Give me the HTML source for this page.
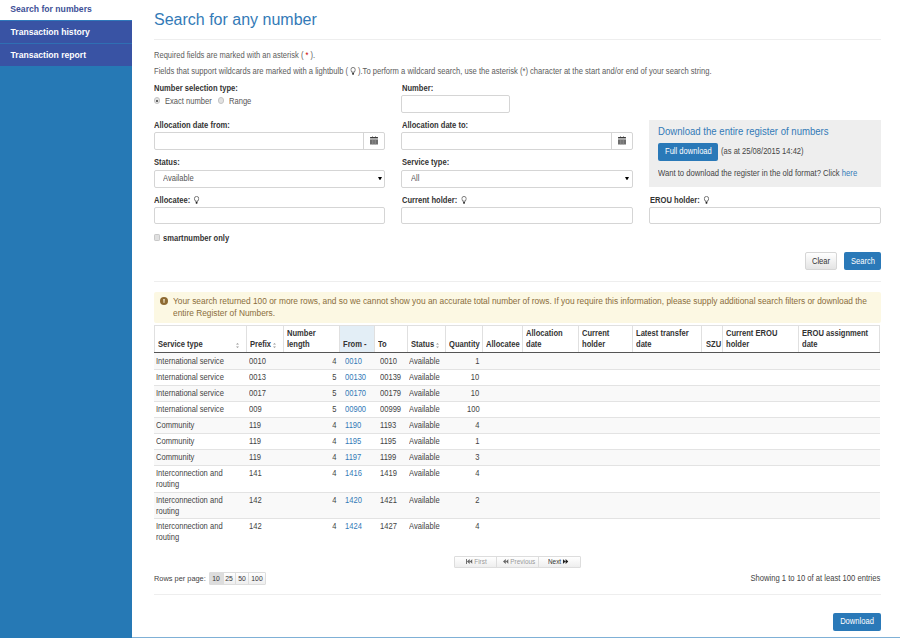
<!DOCTYPE html><html><head><meta charset="utf-8"><style>
*{margin:0;padding:0}
html,body{width:900px;height:638px;overflow:hidden;background:#fff;font-family:"Liberation Sans",sans-serif}
.t{position:absolute;white-space:nowrap}
.r{position:absolute}
.radio{position:absolute;width:6.4px;height:6.4px;border:0.8px solid #c4c4c4;border-radius:50%;background:#e2e2e2;box-sizing:border-box}
.radio.on:after{content:"";position:absolute;left:1.4px;top:1.4px;width:2.2px;height:2.2px;border-radius:50%;background:#555;box-shadow:0 0 0.6px #777}
.chk{position:absolute;width:6px;height:6.3px;border:0.8px solid #c8c8c8;border-radius:1.2px;background:#e0e0e0;box-sizing:border-box}
.cal,.warn,.sort,.caret{position:absolute}
.cal svg,.warn svg,.sort svg,.caret svg{display:block}

.sort{position:absolute;width:3px;height:5px}
.bulb{display:inline-block;width:6px;height:8px;vertical-align:-1.5px}
.warn{position:absolute;width:8px;height:8px}
.pg{position:absolute;border:1px solid #ddd;border-radius:1px;box-sizing:border-box;background:linear-gradient(#fff,#eee)}
.ic{font-size:5px}
</style></head><body><div class="r" style="left:0px;top:0px;width:132px;height:20px;background:#fff;"></div>
<div class="t" style="top:4.97px;font-size:8.650px;line-height:8.650px;color:#3d4f96;font-weight:bold;left:10.30px;transform:scaleX(1.0000);transform-origin:0 0;">Search for numbers</div>
<div class="r" style="left:0px;top:20px;width:132px;height:46px;background:#3953a4;"></div>
<div class="r" style="left:0px;top:20px;width:132px;height:1px;background:#2f78bb;"></div>
<div class="r" style="left:0px;top:43px;width:132px;height:1px;background:#2f6fb3;"></div>
<div class="t" style="top:28.00px;font-size:8.600px;line-height:8.600px;color:#fff;font-weight:bold;left:10.60px;transform:scaleX(1.0000);transform-origin:0 0;">Transaction history</div>
<div class="t" style="top:50.80px;font-size:8.600px;line-height:8.600px;color:#fff;font-weight:bold;left:10.60px;transform:scaleX(1.0000);transform-origin:0 0;">Transaction report</div>
<div class="r" style="left:0px;top:66px;width:132px;height:572px;background:#2679b5;"></div>
<div class="t" style="top:12.10px;font-size:16.000px;line-height:16.000px;color:#337ab7;left:154.00px;transform:scaleX(1.0000);transform-origin:0 0;">Search for any number</div>
<div class="r" style="left:154px;top:39px;width:727px;height:1px;background:#eee;"></div>
<div class="t" style="top:51.72px;font-size:8.165px;line-height:8.165px;color:#5c5c5c;left:154.00px;transform:scaleX(0.9259);transform-origin:0 0;">Required fields are marked with an asterisk ( <span style="color:#c00">*</span> ).</div>
<div class="t" style="top:67.19px;font-size:8.230px;line-height:8.230px;color:#5c5c5c;left:154.00px;transform:scaleX(0.9259);transform-origin:0 0;">Fields that support wildcards are marked with a lightbulb ( <svg class="bulb" viewBox="0 0 6 8"><circle cx="3" cy="2.8" r="2.4" fill="#fff" stroke="#555" stroke-width="0.8"/><path d="M1.9 4.6 L2.1 5.8 L3.9 5.8 L4.1 4.6" fill="#fff" stroke="#555" stroke-width="0.7"/><rect x="2" y="5.9" width="2" height="1.9" rx="0.7" fill="#222"/></svg> ).To perform a wildcard search, use the asterisk (*) character at the start and/or end of your search string.</div>
<div class="t" style="top:84.50px;font-size:8.208px;line-height:8.208px;color:#333;font-weight:bold;left:154.40px;transform:scaleX(0.9259);transform-origin:0 0;">Number selection type:</div>
<div class="radio on" style="left:153.7px;top:97.2px"></div>
<div class="t" style="top:97.50px;font-size:8.208px;line-height:8.208px;color:#555;left:165.00px;transform:scaleX(0.9259);transform-origin:0 0;">Exact number</div>
<div class="radio" style="left:218px;top:97.2px"></div>
<div class="t" style="top:97.50px;font-size:8.208px;line-height:8.208px;color:#555;left:228.70px;transform:scaleX(0.9259);transform-origin:0 0;">Range</div>
<div class="t" style="top:84.50px;font-size:8.208px;line-height:8.208px;color:#333;font-weight:bold;left:402.00px;transform:scaleX(0.9259);transform-origin:0 0;">Number:</div>
<div class="r" style="left:401px;top:95px;width:109px;height:18px;border:1px solid #d5d5d5;border-radius:2px;box-sizing:border-box;background:#fff;"></div>
<div class="t" style="top:121.50px;font-size:8.208px;line-height:8.208px;color:#333;font-weight:bold;left:154.00px;transform:scaleX(0.9259);transform-origin:0 0;">Allocation date from:</div>
<div class="r" style="left:154px;top:132px;width:231px;height:18px;border:1px solid #d5d5d5;border-radius:2px;box-sizing:border-box;background:#fff;"></div>
<div class="r" style="left:363px;top:132px;width:1px;height:18px;background:#d5d5d5;"></div>
<div class="cal" style="left:370px;top:136px"><svg width="8" height="9" viewBox="0 0 8 9"><rect x="2" y="0.2" width="0.9" height="1.2" fill="#888"/><rect x="5.1" y="0.2" width="0.9" height="1.2" fill="#888"/><rect x="0" y="1" width="8" height="1.6" rx="0.4" fill="#3a3a3a"/><rect x="0" y="2.6" width="8" height="0.9" fill="#c8c8c8"/><rect x="0" y="3.5" width="8" height="5" fill="#6e6e6e"/><rect x="2.5" y="3.5" width="0.7" height="5" fill="#999"/><rect x="4.8" y="3.5" width="0.7" height="5" fill="#999"/></svg></div>
<div class="t" style="top:121.50px;font-size:8.208px;line-height:8.208px;color:#333;font-weight:bold;left:402.00px;transform:scaleX(0.9259);transform-origin:0 0;">Allocation date to:</div>
<div class="r" style="left:401px;top:132px;width:232px;height:18px;border:1px solid #d5d5d5;border-radius:2px;box-sizing:border-box;background:#fff;"></div>
<div class="r" style="left:611px;top:132px;width:1px;height:18px;background:#d5d5d5;"></div>
<div class="cal" style="left:618px;top:136px"><svg width="8" height="9" viewBox="0 0 8 9"><rect x="2" y="0.2" width="0.9" height="1.2" fill="#888"/><rect x="5.1" y="0.2" width="0.9" height="1.2" fill="#888"/><rect x="0" y="1" width="8" height="1.6" rx="0.4" fill="#3a3a3a"/><rect x="0" y="2.6" width="8" height="0.9" fill="#c8c8c8"/><rect x="0" y="3.5" width="8" height="5" fill="#6e6e6e"/><rect x="2.5" y="3.5" width="0.7" height="5" fill="#999"/><rect x="4.8" y="3.5" width="0.7" height="5" fill="#999"/></svg></div>
<div class="r" style="left:649px;top:120px;width:232px;height:67px;background:#eee;"></div>
<div class="t" style="top:127.32px;font-size:10.368px;line-height:10.368px;color:#337ab7;left:657.80px;transform:scaleX(0.9259);transform-origin:0 0;">Download the entire register of numbers</div>
<div class="r" style="left:658px;top:143px;width:60px;height:17.5px;background:#2a79b8;border-radius:2px;"></div>
<div class="t" style="top:148.20px;font-size:8.208px;line-height:8.208px;color:#fff;left:664.60px;transform:scaleX(0.9259);transform-origin:0 0;">Full download</div>
<div class="t" style="top:148.20px;font-size:8.208px;line-height:8.208px;color:#444;left:720.50px;transform:scaleX(0.9259);transform-origin:0 0;">(as at 25/08/2015 14:42)</div>
<div class="t" style="top:168.95px;font-size:8.294px;line-height:8.294px;color:#444;left:657.80px;transform:scaleX(0.9259);transform-origin:0 0;">Want to download the register in the old format? Click <span style="color:#337ab7">here</span></div>
<div class="t" style="top:158.70px;font-size:8.208px;line-height:8.208px;color:#333;font-weight:bold;left:154.00px;transform:scaleX(0.9259);transform-origin:0 0;">Status:</div>
<div class="r" style="left:154px;top:170px;width:231px;height:18px;border:1px solid #d5d5d5;border-radius:2px;box-sizing:border-box;background:#fff;"></div>
<div class="t" style="top:175.20px;font-size:8.208px;line-height:8.208px;color:#555;left:163.30px;transform:scaleX(0.9259);transform-origin:0 0;">Available</div>
<div class="caret" style="left:377.6px;top:176.7px"><svg width="4" height="3.5" viewBox="0 0 4 3.5"><path d="M0 0 L4 0 L2 3.5Z" fill="#000"/></svg></div>
<div class="t" style="top:158.70px;font-size:8.208px;line-height:8.208px;color:#333;font-weight:bold;left:402.00px;transform:scaleX(0.9259);transform-origin:0 0;">Service type:</div>
<div class="r" style="left:401px;top:170px;width:232px;height:18px;border:1px solid #d5d5d5;border-radius:2px;box-sizing:border-box;background:#fff;"></div>
<div class="t" style="top:175.20px;font-size:8.208px;line-height:8.208px;color:#555;left:411.00px;transform:scaleX(0.9259);transform-origin:0 0;">All</div>
<div class="caret" style="left:625.4px;top:176.7px"><svg width="4" height="3.5" viewBox="0 0 4 3.5"><path d="M0 0 L4 0 L2 3.5Z" fill="#000"/></svg></div>
<div class="t" style="top:195.90px;font-size:8.208px;line-height:8.208px;color:#333;font-weight:bold;left:154.00px;transform:scaleX(0.9259);transform-origin:0 0;">Allocatee: <svg class="bulb" style="margin-left:2px" viewBox="0 0 6 8"><circle cx="3" cy="2.8" r="2.4" fill="#fff" stroke="#555" stroke-width="0.8"/><path d="M1.9 4.6 L2.1 5.8 L3.9 5.8 L4.1 4.6" fill="#fff" stroke="#555" stroke-width="0.7"/><rect x="2" y="5.9" width="2" height="1.9" rx="0.7" fill="#222"/></svg></div>
<div class="r" style="left:154px;top:207px;width:231px;height:17px;border:1px solid #d5d5d5;border-radius:2px;box-sizing:border-box;background:#fff;"></div>
<div class="t" style="top:195.90px;font-size:8.208px;line-height:8.208px;color:#333;font-weight:bold;left:402.00px;transform:scaleX(0.9259);transform-origin:0 0;">Current holder: <svg class="bulb" style="margin-left:2px" viewBox="0 0 6 8"><circle cx="3" cy="2.8" r="2.4" fill="#fff" stroke="#555" stroke-width="0.8"/><path d="M1.9 4.6 L2.1 5.8 L3.9 5.8 L4.1 4.6" fill="#fff" stroke="#555" stroke-width="0.7"/><rect x="2" y="5.9" width="2" height="1.9" rx="0.7" fill="#222"/></svg></div>
<div class="r" style="left:401px;top:207px;width:232px;height:17px;border:1px solid #d5d5d5;border-radius:2px;box-sizing:border-box;background:#fff;"></div>
<div class="t" style="top:195.90px;font-size:8.208px;line-height:8.208px;color:#333;font-weight:bold;left:649.50px;transform:scaleX(0.9259);transform-origin:0 0;">EROU holder: <svg class="bulb" style="margin-left:2px" viewBox="0 0 6 8"><circle cx="3" cy="2.8" r="2.4" fill="#fff" stroke="#555" stroke-width="0.8"/><path d="M1.9 4.6 L2.1 5.8 L3.9 5.8 L4.1 4.6" fill="#fff" stroke="#555" stroke-width="0.7"/><rect x="2" y="5.9" width="2" height="1.9" rx="0.7" fill="#222"/></svg></div>
<div class="r" style="left:649px;top:207px;width:232px;height:17px;border:1px solid #d5d5d5;border-radius:2px;box-sizing:border-box;background:#fff;"></div>
<div class="chk" style="left:154px;top:234.4px"></div>
<div class="t" style="top:234.90px;font-size:8.208px;line-height:8.208px;color:#333;font-weight:bold;left:163.10px;transform:scaleX(0.9259);transform-origin:0 0;">smartnumber only</div>
<div class="r" style="left:805px;top:252px;width:32px;height:18px;border:1px solid #d6d6d6;border-radius:2px;box-sizing:border-box;background:linear-gradient(#fff,#e4e4e4);"></div>
<div class="t" style="top:257.60px;font-size:8.208px;line-height:8.208px;color:#333;left:821.20px;transform:translateX(-50%) scaleX(0.9259);transform-origin:50% 0;">Clear</div>
<div class="r" style="left:844px;top:252px;width:37px;height:18px;background:#2a79b8;border-radius:2px;"></div>
<div class="t" style="top:257.60px;font-size:8.208px;line-height:8.208px;color:#fff;left:862.50px;transform:translateX(-50%) scaleX(0.9259);transform-origin:50% 0;">Search</div>
<div class="r" style="left:154px;top:281px;width:727px;height:1px;background:#eee;"></div>
<div class="r" style="left:154px;top:292px;width:727px;height:30.5px;background:#fcf8e3;border-radius:2px;"></div>
<div class="warn" style="left:159.8px;top:297px"><svg width="8" height="8" viewBox="0 0 8 8"><circle cx="4" cy="4" r="4" fill="#8d6a33"/><path d="M3.25 1.9 L4.75 1.9 L4.4 6.1 L3.6 6.1Z" fill="#f3ead0"/></svg></div>
<div class="t" style="top:297.19px;font-size:9.029px;line-height:9.029px;color:#8a6d3b;left:172.80px;transform:scaleX(0.9259);transform-origin:0 0;">Your search returned 100 or more rows, and so we cannot show you an accurate total number of rows. If you require this information, please supply additional search filters or download the</div>
<div class="t" style="top:308.99px;font-size:9.029px;line-height:9.029px;color:#8a6d3b;left:172.80px;transform:scaleX(0.9259);transform-origin:0 0;">entire Register of Numbers.</div>
<div class="r" style="left:154px;top:325px;width:726px;height:27px;border:1px solid #e0e0e0;border-bottom:none;box-sizing:border-box;background:#fff;"></div>
<div class="r" style="left:340px;top:326px;width:34px;height:26px;background:#e3eef6;"></div>
<div class="r" style="left:246px;top:325px;width:1px;height:27px;background:#e0e0e0;"></div>
<div class="r" style="left:283px;top:325px;width:1px;height:27px;background:#e0e0e0;"></div>
<div class="r" style="left:339px;top:325px;width:1px;height:27px;background:#e0e0e0;"></div>
<div class="r" style="left:374px;top:325px;width:1px;height:27px;background:#e0e0e0;"></div>
<div class="r" style="left:407px;top:325px;width:1px;height:27px;background:#e0e0e0;"></div>
<div class="r" style="left:445px;top:325px;width:1px;height:27px;background:#e0e0e0;"></div>
<div class="r" style="left:482px;top:325px;width:1px;height:27px;background:#e0e0e0;"></div>
<div class="r" style="left:522px;top:325px;width:1px;height:27px;background:#e0e0e0;"></div>
<div class="r" style="left:578px;top:325px;width:1px;height:27px;background:#e0e0e0;"></div>
<div class="r" style="left:632px;top:325px;width:1px;height:27px;background:#e0e0e0;"></div>
<div class="r" style="left:701px;top:325px;width:1px;height:27px;background:#e0e0e0;"></div>
<div class="r" style="left:722px;top:325px;width:1px;height:27px;background:#e0e0e0;"></div>
<div class="r" style="left:798px;top:325px;width:1px;height:27px;background:#e0e0e0;"></div>
<div class="r" style="left:154px;top:352px;width:726px;height:1px;background:#555;"></div>
<div class="t" style="top:340.70px;font-size:8.208px;line-height:8.208px;color:#333;font-weight:bold;left:158.00px;transform:scaleX(0.9259);transform-origin:0 0;">Service type</div>
<div class="t" style="top:340.70px;font-size:8.208px;line-height:8.208px;color:#333;font-weight:bold;left:249.70px;transform:scaleX(0.9259);transform-origin:0 0;">Prefix</div>
<div class="t" style="top:340.70px;font-size:8.208px;line-height:8.208px;color:#333;font-weight:bold;left:286.70px;transform:scaleX(0.9259);transform-origin:0 0;">length</div>
<div class="t" style="top:330.20px;font-size:8.208px;line-height:8.208px;color:#333;font-weight:bold;left:286.70px;transform:scaleX(0.9259);transform-origin:0 0;">Number</div>
<div class="t" style="top:340.70px;font-size:8.208px;line-height:8.208px;color:#333;font-weight:bold;left:343.00px;transform:scaleX(0.9259);transform-origin:0 0;">From -</div>
<div class="t" style="top:340.70px;font-size:8.208px;line-height:8.208px;color:#333;font-weight:bold;left:378.30px;transform:scaleX(0.9259);transform-origin:0 0;">To</div>
<div class="t" style="top:340.70px;font-size:8.208px;line-height:8.208px;color:#333;font-weight:bold;left:411.30px;transform:scaleX(0.9259);transform-origin:0 0;">Status</div>
<div class="t" style="top:340.70px;font-size:8.208px;line-height:8.208px;color:#333;font-weight:bold;left:449.20px;transform:scaleX(0.9259);transform-origin:0 0;">Quantity</div>
<div class="t" style="top:340.70px;font-size:8.208px;line-height:8.208px;color:#333;font-weight:bold;left:486.20px;transform:scaleX(0.9259);transform-origin:0 0;">Allocatee</div>
<div class="t" style="top:340.70px;font-size:8.208px;line-height:8.208px;color:#333;font-weight:bold;left:526.00px;transform:scaleX(0.9259);transform-origin:0 0;">date</div>
<div class="t" style="top:330.20px;font-size:8.208px;line-height:8.208px;color:#333;font-weight:bold;left:526.00px;transform:scaleX(0.9259);transform-origin:0 0;">Allocation</div>
<div class="t" style="top:340.70px;font-size:8.208px;line-height:8.208px;color:#333;font-weight:bold;left:581.80px;transform:scaleX(0.9259);transform-origin:0 0;">holder</div>
<div class="t" style="top:330.20px;font-size:8.208px;line-height:8.208px;color:#333;font-weight:bold;left:581.80px;transform:scaleX(0.9259);transform-origin:0 0;">Current</div>
<div class="t" style="top:340.70px;font-size:8.208px;line-height:8.208px;color:#333;font-weight:bold;left:635.80px;transform:scaleX(0.9259);transform-origin:0 0;">date</div>
<div class="t" style="top:330.20px;font-size:8.208px;line-height:8.208px;color:#333;font-weight:bold;left:635.80px;transform:scaleX(0.9259);transform-origin:0 0;">Latest transfer</div>
<div class="t" style="top:340.70px;font-size:8.208px;line-height:8.208px;color:#333;font-weight:bold;left:705.70px;transform:scaleX(0.9259);transform-origin:0 0;">SZU</div>
<div class="t" style="top:340.70px;font-size:8.208px;line-height:8.208px;color:#333;font-weight:bold;left:726.00px;transform:scaleX(0.9259);transform-origin:0 0;">holder</div>
<div class="t" style="top:330.20px;font-size:8.208px;line-height:8.208px;color:#333;font-weight:bold;left:726.00px;transform:scaleX(0.9259);transform-origin:0 0;">Current EROU</div>
<div class="t" style="top:340.70px;font-size:8.208px;line-height:8.208px;color:#333;font-weight:bold;left:801.80px;transform:scaleX(0.9259);transform-origin:0 0;">date</div>
<div class="t" style="top:330.20px;font-size:8.208px;line-height:8.208px;color:#333;font-weight:bold;left:801.80px;transform:scaleX(0.9259);transform-origin:0 0;">EROU assignment</div>
<div class="sort" style="left:236px;top:342.5px"><svg width="3" height="5" viewBox="0 0 3 5"><path d="M0 1.6 L1.5 0 L3 1.6Z" fill="#999"/><path d="M0 3.4 L1.5 5 L3 3.4Z" fill="#999"/></svg></div>
<div class="sort" style="left:273px;top:342.5px"><svg width="3" height="5" viewBox="0 0 3 5"><path d="M0 1.6 L1.5 0 L3 1.6Z" fill="#999"/><path d="M0 3.4 L1.5 5 L3 3.4Z" fill="#999"/></svg></div>
<div class="sort" style="left:436px;top:342.5px"><svg width="3" height="5" viewBox="0 0 3 5"><path d="M0 1.6 L1.5 0 L3 1.6Z" fill="#999"/><path d="M0 3.4 L1.5 5 L3 3.4Z" fill="#999"/></svg></div>
<div class="r" style="left:154px;top:353px;width:726px;height:16px;background:#f9f9f9;"></div>
<div class="t" style="top:357.70px;font-size:8.208px;line-height:8.208px;color:#444;left:156.00px;transform:scaleX(0.9259);transform-origin:0 0;">International service</div>
<div class="t" style="top:357.70px;font-size:8.208px;line-height:8.208px;color:#444;left:248.70px;transform:scaleX(0.9259);transform-origin:0 0;">0010</div>
<div class="t" style="top:357.70px;font-size:8.208px;line-height:8.208px;color:#444;right:563.40px;transform:scaleX(0.9259);transform-origin:100% 0;">4</div>
<div class="t" style="top:357.70px;font-size:8.208px;line-height:8.208px;color:#337ab7;left:344.70px;transform:scaleX(0.9259);transform-origin:0 0;">0010</div>
<div class="t" style="top:357.70px;font-size:8.208px;line-height:8.208px;color:#444;left:380.00px;transform:scaleX(0.9259);transform-origin:0 0;">0010</div>
<div class="t" style="top:357.70px;font-size:8.208px;line-height:8.208px;color:#444;left:409.10px;transform:scaleX(0.9259);transform-origin:0 0;">Available</div>
<div class="t" style="top:357.70px;font-size:8.208px;line-height:8.208px;color:#444;right:420.70px;transform:scaleX(0.9259);transform-origin:100% 0;">1</div>
<div class="r" style="left:154px;top:369px;width:726px;height:16px;background:#fff;"></div>
<div class="r" style="left:154px;top:369px;width:726px;height:1px;background:#e3e3e3;"></div>
<div class="t" style="top:373.90px;font-size:8.208px;line-height:8.208px;color:#444;left:156.00px;transform:scaleX(0.9259);transform-origin:0 0;">International service</div>
<div class="t" style="top:373.90px;font-size:8.208px;line-height:8.208px;color:#444;left:248.70px;transform:scaleX(0.9259);transform-origin:0 0;">0013</div>
<div class="t" style="top:373.90px;font-size:8.208px;line-height:8.208px;color:#444;right:563.40px;transform:scaleX(0.9259);transform-origin:100% 0;">5</div>
<div class="t" style="top:373.90px;font-size:8.208px;line-height:8.208px;color:#337ab7;left:344.70px;transform:scaleX(0.9259);transform-origin:0 0;">00130</div>
<div class="t" style="top:373.90px;font-size:8.208px;line-height:8.208px;color:#444;left:380.00px;transform:scaleX(0.9259);transform-origin:0 0;">00139</div>
<div class="t" style="top:373.90px;font-size:8.208px;line-height:8.208px;color:#444;left:409.10px;transform:scaleX(0.9259);transform-origin:0 0;">Available</div>
<div class="t" style="top:373.90px;font-size:8.208px;line-height:8.208px;color:#444;right:420.70px;transform:scaleX(0.9259);transform-origin:100% 0;">10</div>
<div class="r" style="left:154px;top:385px;width:726px;height:16px;background:#f9f9f9;"></div>
<div class="r" style="left:154px;top:385px;width:726px;height:1px;background:#e3e3e3;"></div>
<div class="t" style="top:389.90px;font-size:8.208px;line-height:8.208px;color:#444;left:156.00px;transform:scaleX(0.9259);transform-origin:0 0;">International service</div>
<div class="t" style="top:389.90px;font-size:8.208px;line-height:8.208px;color:#444;left:248.70px;transform:scaleX(0.9259);transform-origin:0 0;">0017</div>
<div class="t" style="top:389.90px;font-size:8.208px;line-height:8.208px;color:#444;right:563.40px;transform:scaleX(0.9259);transform-origin:100% 0;">5</div>
<div class="t" style="top:389.90px;font-size:8.208px;line-height:8.208px;color:#337ab7;left:344.70px;transform:scaleX(0.9259);transform-origin:0 0;">00170</div>
<div class="t" style="top:389.90px;font-size:8.208px;line-height:8.208px;color:#444;left:380.00px;transform:scaleX(0.9259);transform-origin:0 0;">00179</div>
<div class="t" style="top:389.90px;font-size:8.208px;line-height:8.208px;color:#444;left:409.10px;transform:scaleX(0.9259);transform-origin:0 0;">Available</div>
<div class="t" style="top:389.90px;font-size:8.208px;line-height:8.208px;color:#444;right:420.70px;transform:scaleX(0.9259);transform-origin:100% 0;">10</div>
<div class="r" style="left:154px;top:401px;width:726px;height:16px;background:#fff;"></div>
<div class="r" style="left:154px;top:401px;width:726px;height:1px;background:#e3e3e3;"></div>
<div class="t" style="top:405.90px;font-size:8.208px;line-height:8.208px;color:#444;left:156.00px;transform:scaleX(0.9259);transform-origin:0 0;">International service</div>
<div class="t" style="top:405.90px;font-size:8.208px;line-height:8.208px;color:#444;left:248.70px;transform:scaleX(0.9259);transform-origin:0 0;">009</div>
<div class="t" style="top:405.90px;font-size:8.208px;line-height:8.208px;color:#444;right:563.40px;transform:scaleX(0.9259);transform-origin:100% 0;">5</div>
<div class="t" style="top:405.90px;font-size:8.208px;line-height:8.208px;color:#337ab7;left:344.70px;transform:scaleX(0.9259);transform-origin:0 0;">00900</div>
<div class="t" style="top:405.90px;font-size:8.208px;line-height:8.208px;color:#444;left:380.00px;transform:scaleX(0.9259);transform-origin:0 0;">00999</div>
<div class="t" style="top:405.90px;font-size:8.208px;line-height:8.208px;color:#444;left:409.10px;transform:scaleX(0.9259);transform-origin:0 0;">Available</div>
<div class="t" style="top:405.90px;font-size:8.208px;line-height:8.208px;color:#444;right:420.70px;transform:scaleX(0.9259);transform-origin:100% 0;">100</div>
<div class="r" style="left:154px;top:417px;width:726px;height:16px;background:#f9f9f9;"></div>
<div class="r" style="left:154px;top:417px;width:726px;height:1px;background:#e3e3e3;"></div>
<div class="t" style="top:421.90px;font-size:8.208px;line-height:8.208px;color:#444;left:156.00px;transform:scaleX(0.9259);transform-origin:0 0;">Community</div>
<div class="t" style="top:421.90px;font-size:8.208px;line-height:8.208px;color:#444;left:248.70px;transform:scaleX(0.9259);transform-origin:0 0;">119</div>
<div class="t" style="top:421.90px;font-size:8.208px;line-height:8.208px;color:#444;right:563.40px;transform:scaleX(0.9259);transform-origin:100% 0;">4</div>
<div class="t" style="top:421.90px;font-size:8.208px;line-height:8.208px;color:#337ab7;left:344.70px;transform:scaleX(0.9259);transform-origin:0 0;">1190</div>
<div class="t" style="top:421.90px;font-size:8.208px;line-height:8.208px;color:#444;left:380.00px;transform:scaleX(0.9259);transform-origin:0 0;">1193</div>
<div class="t" style="top:421.90px;font-size:8.208px;line-height:8.208px;color:#444;left:409.10px;transform:scaleX(0.9259);transform-origin:0 0;">Available</div>
<div class="t" style="top:421.90px;font-size:8.208px;line-height:8.208px;color:#444;right:420.70px;transform:scaleX(0.9259);transform-origin:100% 0;">4</div>
<div class="r" style="left:154px;top:433px;width:726px;height:16px;background:#fff;"></div>
<div class="r" style="left:154px;top:433px;width:726px;height:1px;background:#e3e3e3;"></div>
<div class="t" style="top:437.90px;font-size:8.208px;line-height:8.208px;color:#444;left:156.00px;transform:scaleX(0.9259);transform-origin:0 0;">Community</div>
<div class="t" style="top:437.90px;font-size:8.208px;line-height:8.208px;color:#444;left:248.70px;transform:scaleX(0.9259);transform-origin:0 0;">119</div>
<div class="t" style="top:437.90px;font-size:8.208px;line-height:8.208px;color:#444;right:563.40px;transform:scaleX(0.9259);transform-origin:100% 0;">4</div>
<div class="t" style="top:437.90px;font-size:8.208px;line-height:8.208px;color:#337ab7;left:344.70px;transform:scaleX(0.9259);transform-origin:0 0;">1195</div>
<div class="t" style="top:437.90px;font-size:8.208px;line-height:8.208px;color:#444;left:380.00px;transform:scaleX(0.9259);transform-origin:0 0;">1195</div>
<div class="t" style="top:437.90px;font-size:8.208px;line-height:8.208px;color:#444;left:409.10px;transform:scaleX(0.9259);transform-origin:0 0;">Available</div>
<div class="t" style="top:437.90px;font-size:8.208px;line-height:8.208px;color:#444;right:420.70px;transform:scaleX(0.9259);transform-origin:100% 0;">1</div>
<div class="r" style="left:154px;top:449px;width:726px;height:16px;background:#f9f9f9;"></div>
<div class="r" style="left:154px;top:449px;width:726px;height:1px;background:#e3e3e3;"></div>
<div class="t" style="top:453.90px;font-size:8.208px;line-height:8.208px;color:#444;left:156.00px;transform:scaleX(0.9259);transform-origin:0 0;">Community</div>
<div class="t" style="top:453.90px;font-size:8.208px;line-height:8.208px;color:#444;left:248.70px;transform:scaleX(0.9259);transform-origin:0 0;">119</div>
<div class="t" style="top:453.90px;font-size:8.208px;line-height:8.208px;color:#444;right:563.40px;transform:scaleX(0.9259);transform-origin:100% 0;">4</div>
<div class="t" style="top:453.90px;font-size:8.208px;line-height:8.208px;color:#337ab7;left:344.70px;transform:scaleX(0.9259);transform-origin:0 0;">1197</div>
<div class="t" style="top:453.90px;font-size:8.208px;line-height:8.208px;color:#444;left:380.00px;transform:scaleX(0.9259);transform-origin:0 0;">1199</div>
<div class="t" style="top:453.90px;font-size:8.208px;line-height:8.208px;color:#444;left:409.10px;transform:scaleX(0.9259);transform-origin:0 0;">Available</div>
<div class="t" style="top:453.90px;font-size:8.208px;line-height:8.208px;color:#444;right:420.70px;transform:scaleX(0.9259);transform-origin:100% 0;">3</div>
<div class="r" style="left:154px;top:465px;width:726px;height:27px;background:#fff;"></div>
<div class="r" style="left:154px;top:465px;width:726px;height:1px;background:#e3e3e3;"></div>
<div class="t" style="top:469.90px;font-size:8.208px;line-height:8.208px;color:#444;left:156.00px;transform:scaleX(0.9259);transform-origin:0 0;">Interconnection and</div>
<div class="t" style="top:480.90px;font-size:8.208px;line-height:8.208px;color:#444;left:156.00px;transform:scaleX(0.9259);transform-origin:0 0;">routing</div>
<div class="t" style="top:469.90px;font-size:8.208px;line-height:8.208px;color:#444;left:248.70px;transform:scaleX(0.9259);transform-origin:0 0;">141</div>
<div class="t" style="top:469.90px;font-size:8.208px;line-height:8.208px;color:#444;right:563.40px;transform:scaleX(0.9259);transform-origin:100% 0;">4</div>
<div class="t" style="top:469.90px;font-size:8.208px;line-height:8.208px;color:#337ab7;left:344.70px;transform:scaleX(0.9259);transform-origin:0 0;">1416</div>
<div class="t" style="top:469.90px;font-size:8.208px;line-height:8.208px;color:#444;left:380.00px;transform:scaleX(0.9259);transform-origin:0 0;">1419</div>
<div class="t" style="top:469.90px;font-size:8.208px;line-height:8.208px;color:#444;left:409.10px;transform:scaleX(0.9259);transform-origin:0 0;">Available</div>
<div class="t" style="top:469.90px;font-size:8.208px;line-height:8.208px;color:#444;right:420.70px;transform:scaleX(0.9259);transform-origin:100% 0;">4</div>
<div class="r" style="left:154px;top:492px;width:726px;height:26px;background:#f9f9f9;"></div>
<div class="r" style="left:154px;top:492px;width:726px;height:1px;background:#e3e3e3;"></div>
<div class="t" style="top:496.90px;font-size:8.208px;line-height:8.208px;color:#444;left:156.00px;transform:scaleX(0.9259);transform-origin:0 0;">Interconnection and</div>
<div class="t" style="top:507.90px;font-size:8.208px;line-height:8.208px;color:#444;left:156.00px;transform:scaleX(0.9259);transform-origin:0 0;">routing</div>
<div class="t" style="top:496.90px;font-size:8.208px;line-height:8.208px;color:#444;left:248.70px;transform:scaleX(0.9259);transform-origin:0 0;">142</div>
<div class="t" style="top:496.90px;font-size:8.208px;line-height:8.208px;color:#444;right:563.40px;transform:scaleX(0.9259);transform-origin:100% 0;">4</div>
<div class="t" style="top:496.90px;font-size:8.208px;line-height:8.208px;color:#337ab7;left:344.70px;transform:scaleX(0.9259);transform-origin:0 0;">1420</div>
<div class="t" style="top:496.90px;font-size:8.208px;line-height:8.208px;color:#444;left:380.00px;transform:scaleX(0.9259);transform-origin:0 0;">1421</div>
<div class="t" style="top:496.90px;font-size:8.208px;line-height:8.208px;color:#444;left:409.10px;transform:scaleX(0.9259);transform-origin:0 0;">Available</div>
<div class="t" style="top:496.90px;font-size:8.208px;line-height:8.208px;color:#444;right:420.70px;transform:scaleX(0.9259);transform-origin:100% 0;">2</div>
<div class="r" style="left:154px;top:518px;width:726px;height:27px;background:#fff;"></div>
<div class="r" style="left:154px;top:518px;width:726px;height:1px;background:#e3e3e3;"></div>
<div class="t" style="top:522.90px;font-size:8.208px;line-height:8.208px;color:#444;left:156.00px;transform:scaleX(0.9259);transform-origin:0 0;">Interconnection and</div>
<div class="t" style="top:533.90px;font-size:8.208px;line-height:8.208px;color:#444;left:156.00px;transform:scaleX(0.9259);transform-origin:0 0;">routing</div>
<div class="t" style="top:522.90px;font-size:8.208px;line-height:8.208px;color:#444;left:248.70px;transform:scaleX(0.9259);transform-origin:0 0;">142</div>
<div class="t" style="top:522.90px;font-size:8.208px;line-height:8.208px;color:#444;right:563.40px;transform:scaleX(0.9259);transform-origin:100% 0;">4</div>
<div class="t" style="top:522.90px;font-size:8.208px;line-height:8.208px;color:#337ab7;left:344.70px;transform:scaleX(0.9259);transform-origin:0 0;">1424</div>
<div class="t" style="top:522.90px;font-size:8.208px;line-height:8.208px;color:#444;left:380.00px;transform:scaleX(0.9259);transform-origin:0 0;">1427</div>
<div class="t" style="top:522.90px;font-size:8.208px;line-height:8.208px;color:#444;left:409.10px;transform:scaleX(0.9259);transform-origin:0 0;">Available</div>
<div class="t" style="top:522.90px;font-size:8.208px;line-height:8.208px;color:#444;right:420.70px;transform:scaleX(0.9259);transform-origin:100% 0;">4</div>
<div class="pg" style="left:454px;top:556px;width:127px;height:11.5px"></div>
<div class="r" style="left:496px;top:556px;width:1px;height:11.5px;background:#ddd;"></div>
<div class="r" style="left:538px;top:556px;width:1px;height:11.5px;background:#ddd;"></div>
<div class="t" style="top:558.54px;font-size:6.912px;line-height:6.912px;color:#999;left:465.50px;transform:scaleX(0.9259);transform-origin:0 0;"><svg width="7" height="5" viewBox="0 0 7 5" style="vertical-align:0"><rect x="0" y="0" width="1" height="5" fill="#666"/><path d="M4 0 L1 2.5 L4 5Z M7 0 L4 2.5 L7 5Z" fill="#666"/></svg> First</div>
<div class="t" style="top:558.54px;font-size:6.912px;line-height:6.912px;color:#999;left:503.00px;transform:scaleX(0.9259);transform-origin:0 0;"><svg width="6" height="5" viewBox="0 0 6 5" style="vertical-align:0"><path d="M3 0 L0 2.5 L3 5Z M6 0 L3 2.5 L6 5Z" fill="#666"/></svg> Previous</div>
<div class="t" style="top:558.54px;font-size:6.912px;line-height:6.912px;color:#333;left:547.50px;transform:scaleX(0.9259);transform-origin:0 0;">Next <svg width="6" height="5" viewBox="0 0 6 5" style="vertical-align:0"><path d="M0 0 L3 2.5 L0 5Z M3 0 L6 2.5 L3 5Z" fill="#222"/></svg></div>
<div class="t" style="top:575.20px;font-size:7.992px;line-height:7.992px;color:#444;left:154.00px;transform:scaleX(0.9259);transform-origin:0 0;">Rows per page:</div>
<div class="pg" style="left:209px;top:572px;width:57px;height:12.5px"></div>
<div class="r" style="left:210px;top:573px;width:13px;height:10.5px;background:#ddd;"></div>
<div class="r" style="left:223px;top:572px;width:1px;height:12.5px;background:#ddd;"></div>
<div class="r" style="left:235px;top:572px;width:1px;height:12.5px;background:#ddd;"></div>
<div class="r" style="left:248px;top:572px;width:1px;height:12.5px;background:#ddd;"></div>
<div class="t" style="top:575.13px;font-size:7.344px;line-height:7.344px;color:#333;left:216.20px;transform:translateX(-50%) scaleX(0.9259);transform-origin:50% 0;">10</div>
<div class="t" style="top:575.13px;font-size:7.344px;line-height:7.344px;color:#333;left:229.40px;transform:translateX(-50%) scaleX(0.9259);transform-origin:50% 0;">25</div>
<div class="t" style="top:575.13px;font-size:7.344px;line-height:7.344px;color:#333;left:242.20px;transform:translateX(-50%) scaleX(0.9259);transform-origin:50% 0;">50</div>
<div class="t" style="top:575.13px;font-size:7.344px;line-height:7.344px;color:#333;left:257.20px;transform:translateX(-50%) scaleX(0.9259);transform-origin:50% 0;">100</div>
<div class="t" style="top:574.67px;font-size:8.251px;line-height:8.251px;color:#444;right:19.20px;transform:scaleX(0.9259);transform-origin:100% 0;">Showing 1 to 10 of at least 100 entries</div>
<div class="r" style="left:154px;top:594px;width:727px;height:1px;background:#eee;"></div>
<div class="r" style="left:833px;top:613px;width:48px;height:18px;background:#2a79b8;border-radius:2px;"></div>
<div class="t" style="top:618.30px;font-size:8.208px;line-height:8.208px;color:#fff;left:857.20px;transform:translateX(-50%) scaleX(0.9259);transform-origin:50% 0;">Download</div>
<div class="r" style="left:132px;top:637px;width:768px;height:1px;background:#7fb0d6;"></div></body></html>
